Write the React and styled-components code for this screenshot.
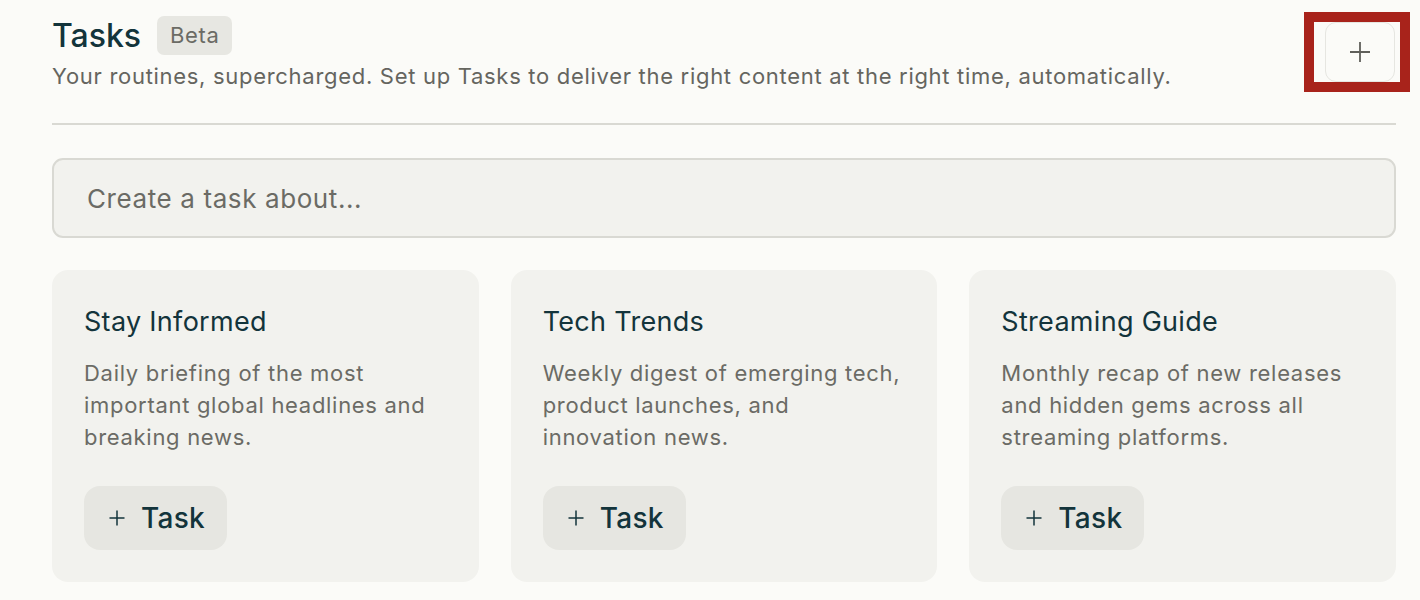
import React from "react";
import styled, { createGlobalStyle } from "styled-components";

const GlobalStyle = createGlobalStyle`
  body {
    margin: 0;
    background: #fbfbf8;
    font-family: "Inter", "Liberation Sans", sans-serif;
    color: #13343b;
  }
`;

const Page = styled.main`
  padding: 15px 24px 0 52px;
`;

const Header = styled.header`
  display: flex;
  justify-content: space-between;
  align-items: flex-start;
  padding-bottom: 32px;
  border-bottom: 2px solid #d9d9d3;
`;

const TitleRow = styled.div`
  display: flex;
  align-items: center;
  gap: 16px;
  height: 40px;
`;

const Title = styled.h1`
  margin: 0;
  font-size: 32px;
  font-weight: 500;
  color: #13343b;
`;

const Badge = styled.span`
  padding: 4px 13px;
  border-radius: 7px;
  background: #e7e7e2;
  color: #6b6b65;
  font-size: 22px;
  line-height: 31px;
  letter-spacing: 0.6px;
`;

const Subtitle = styled.p`
  margin: 6px 0 0;
  font-size: 22px;
  line-height: 30px;
  color: #65655f;
  letter-spacing: 0.7px;
`;

// 스크린샷에 있는 빨간 강조 테두리
const AddButton = styled.button`
  position: relative;
  display: flex;
  align-items: center;
  justify-content: center;
  width: 70px;
  height: 60px;
  margin-top: 7px;
  margin-right: 1px;
  border: 1.5px solid #e6e6e1;
  border-radius: 11px;
  background: #fbfbf8;
  color: #5f5f5a;

  &::after {
    content: "";
    position: absolute;
    top: -11px;
    bottom: -11px;
    left: -22px;
    right: -16px;
    border: 10px solid #a8231b;
    pointer-events: none;
  }
`;

const SearchBox = styled.div`
  display: flex;
  align-items: center;
  height: 76px;
  margin-top: 33px;
  padding: 0 33px;
  border: 2px solid #d9d9d3;
  border-radius: 11px;
  background: #f2f2ee;
  color: #6b6b65;
  font-size: 26px;
  letter-spacing: 0.6px;
`;

const CardGrid = styled.section`
  display: grid;
  grid-template-columns: repeat(3, 1fr);
  gap: 32px;
  margin-top: 32px;
`;

const Card = styled.article`
  padding: 34px 32px 32px;
  border-radius: 16px;
  background: #f2f2ee;
`;

const CardTitle = styled.h2`
  margin: 0;
  font-size: 27px;
  font-weight: 400;
  line-height: 36px;
  letter-spacing: 0.3px;
  color: #13343b;
`;

const CardText = styled.p`
  margin: 17px 0 0;
  font-size: 22px;
  line-height: 32px;
  letter-spacing: 0.7px;
  color: #6b6b65;
`;

const TaskButton = styled.button`
  display: inline-flex;
  align-items: center;
  gap: 15px;
  margin-top: 33px;
  height: 64px;
  padding: 0 22px 0 24px;
  border: none;
  border-radius: 16px;
  background: #e6e6e1;
  color: #13343b;
  font-family: inherit;
  font-size: 28px;
  font-weight: 500;
  letter-spacing: 0.3px;
`;

const PlusIcon = ({ size = 22, stroke = 2 }) => (
  <svg width={size} height={size} viewBox="0 0 24 24" fill="none" stroke="currentColor" strokeWidth={stroke} strokeLinecap="butt">
    <path d="M12 2v20M2 12h20" />
  </svg>
);

const tasks = [
  {
    title: "Stay Informed",
    text: "Daily briefing of the most important global headlines and breaking news.",
  },
  {
    title: "Tech Trends",
    text: "Weekly digest of emerging tech, product launches, and innovation news.",
  },
  {
    title: "Streaming Guide",
    text: "Monthly recap of new releases and hidden gems across all streaming platforms.",
  },
];

export default function App() {
  return (
    <>
      <GlobalStyle />
      <Page>
        <Header>
          <div>
            <TitleRow>
              <Title>Tasks</Title>
              <Badge>Beta</Badge>
            </TitleRow>
            <Subtitle>
              Your routines, supercharged. Set up Tasks to deliver the right content at the right time, automatically.
            </Subtitle>
          </div>
          <AddButton aria-label="New task">
            <PlusIcon size={24} stroke={1.8} />
          </AddButton>
        </Header>

        <SearchBox>Create a task about...</SearchBox>

        <CardGrid>
          {tasks.map((task) => (
            <Card key={task.title}>
              <CardTitle>{task.title}</CardTitle>
              <CardText>{task.text}</CardText>
              <TaskButton>
                <PlusIcon size={18} stroke={2} />
                Task
              </TaskButton>
            </Card>
          ))}
        </CardGrid>
      </Page>
    </>
  );
}
